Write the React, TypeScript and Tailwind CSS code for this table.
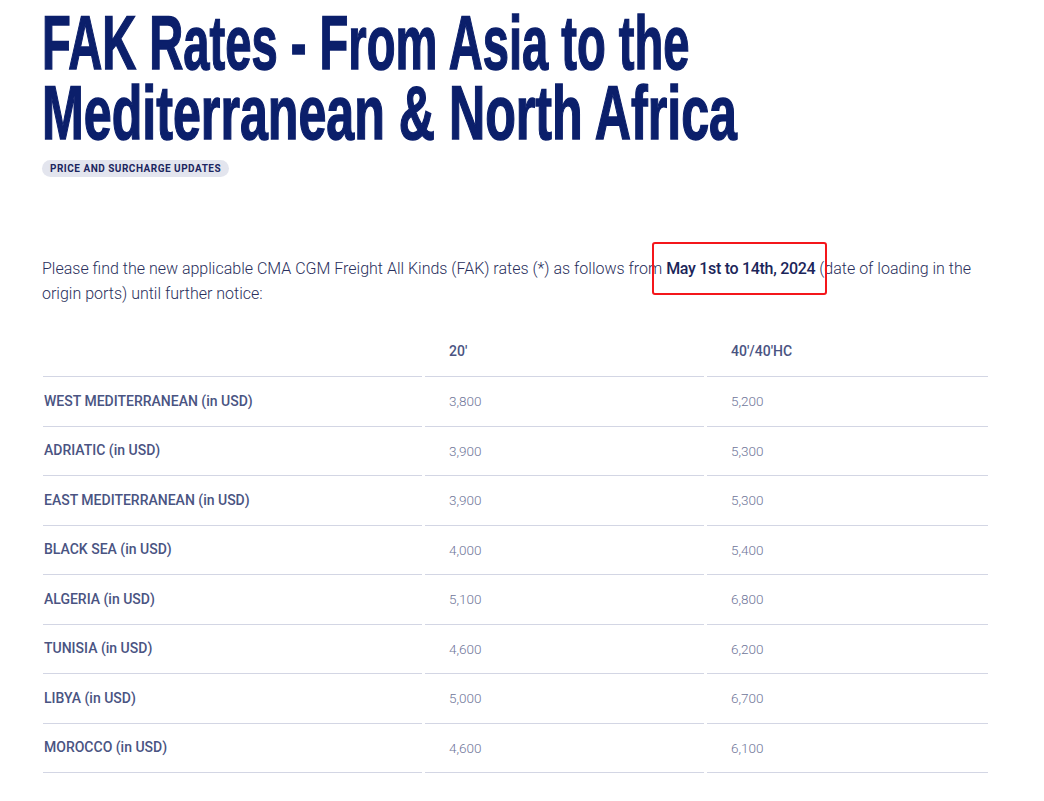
const rows = [
  ['WEST MEDITERRANEAN (in USD)', '3,800', '5,200'],
  ['ADRIATIC (in USD)', '3,900', '5,300'],
  ['EAST MEDITERRANEAN (in USD)', '3,900', '5,300'],
  ['BLACK SEA (in USD)', '4,000', '5,400'],
  ['ALGERIA (in USD)', '5,100', '6,800'],
  ['TUNISIA (in USD)', '4,600', '6,200'],
  ['LIBYA (in USD)', '5,000', '6,700'],
  ['MOROCCO (in USD)', '4,600', '6,100'],
];

export default function App() {
  return (
    <div className="min-h-[801px] bg-white font-['Roboto','Liberation_Sans',sans-serif]">
      <div className="pl-[42px] pt-[8px]">
        <h1 className="font-['Liberation_Sans',sans-serif] text-[76px] leading-[70px] font-bold text-[#0b1f6b] whitespace-nowrap [-webkit-text-stroke:1.5px_#0b1f6b]">
          <span className="inline-block origin-left scale-x-[0.62]">FAK Rates - From Asia to the</span>
          <br />
          <span className="inline-block origin-left scale-x-[0.66]">Mediterranean &amp; North Africa</span>
        </h1>

        <div className="mt-[12px] inline-flex h-[17px] items-center rounded-full bg-[#e3e5ee] px-[8px] text-[10px] font-bold tracking-[0.5px] text-[#1c2660]">
          PRICE AND SURCHARGE UPDATES
        </div>

        <div className="relative mt-[77px] w-[946px]">
          <p className="text-[16px] leading-[25px] font-light text-[#2a2f5c]">
            Please find the new applicable CMA CGM Freight All Kinds (FAK) rates (*) as follows from{' '}
            <span className="font-medium tracking-[-0.3px] text-[#1b2559]">May 1st to 14th, 2024</span> (date of loading in the
            origin ports) until further notice:
          </p>
          <div className="absolute left-[610px] top-[-14px] h-[53px] w-[175px] rounded-[3px] border-2 border-[#f4161b]" />
        </div>

        <div className="mt-[21px] ml-[1px] grid grid-cols-[379px_279px_281px] gap-x-[3px]">
          <div className="h-[50px] border-b border-[#d3d6e4]" />
          <div className="flex h-[50px] items-center border-b border-[#d3d6e4] pl-[24px] text-[14px] font-medium text-[#4a5482]">20'</div>
          <div className="flex h-[50px] items-center border-b border-[#d3d6e4] pl-[24px] text-[14px] font-medium text-[#4a5482]">40'/40'HC</div>
          {rows.map((r) => (
            <div key={r[0]} className="contents">
              <div className="flex h-[49.5px] items-center border-b border-[#d3d6e4] pl-[1px] text-[14px] font-medium text-[#4a5482]">{r[0]}</div>
              <div className="flex h-[49.5px] items-center border-b border-[#d3d6e4] pl-[24px] text-[13.5px] font-light text-[#6f7699]">{r[1]}</div>
              <div className="flex h-[49.5px] items-center border-b border-[#d3d6e4] pl-[24px] text-[13.5px] font-light text-[#6f7699]">{r[2]}</div>
            </div>
          ))}
        </div>
      </div>
    </div>
  );
}
